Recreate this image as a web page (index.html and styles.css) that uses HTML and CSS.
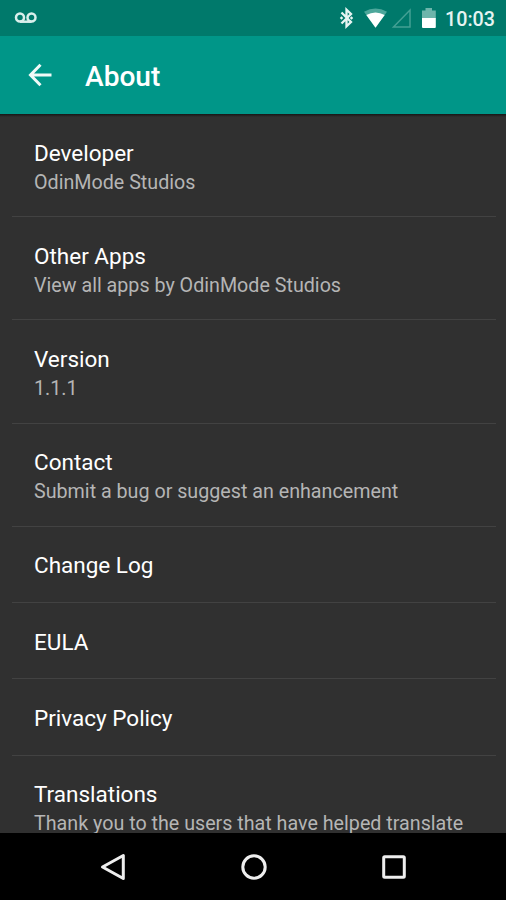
FILE: index.html
```html
<!DOCTYPE html>
<html lang="en">
<head>
<meta charset="utf-8">
<title>About</title>
<link rel="stylesheet" href="styles.css">
</head>
<body>
<div class="screen">
  <div class="status">
    <svg class="voicemail" width="24" height="12" viewBox="0 0 24 12"><g fill="none" stroke="#d9efec" stroke-width="2.5"><circle cx="6" cy="5.500" r="4"/><circle cx="17.500" cy="5.500" r="4"/><path d="M6 9.700h11.500"/></g></svg>
    <svg class="indicators" width="100" height="24" viewBox="0 0 100 24">
      <path d="M1.500 6.500 11 16 6.500 20.300V3.700L11 8 1.500 17.500" fill="none" stroke="#e8f5f3" stroke-width="2.300"/>
      <path d="M1.500 10.300l1.700 1.700-1.700 1.700L-.2 12zM11.500 10.300l1.700 1.700-1.700 1.700L9.800 12z" fill="#e8f5f3"/>
      <path d="M24 5.800Q35.500-1 47 5.800L35.500 21.500z" fill="#4da79b"/>
      <path d="M26.300 9Q35.500 3.800 44.700 9L35.500 21.700z" fill="#fff"/>
      <path d="M53.500 21H70V4z" fill="none" stroke="#43a094" stroke-width="1.500"/>
      <path d="M82 4.500h3.500V2h6.500v2.500h3.800v8H82z" fill="#6db5ab"/>
      <path d="M82 12h13.800v9q0 1-1 1H83q-1 0-1-1z" fill="#fff"/>
    </svg>
    <span class="clock">10:03</span>
  </div>
  <header class="toolbar">
    <svg class="back" width="24" height="24" viewBox="0 0 24 24"><path d="M12.500 1.800 2.500 12 12.500 22.200M2.500 12H23.500" fill="none" stroke="#f0faf8" stroke-width="3"/></svg>
    <h1>About</h1>
  </header>
  <main class="list">
    <div class="row"><div class="title">Developer</div><div class="summary">OdinMode Studios</div></div>
    <div class="row"><div class="title">Other Apps</div><div class="summary">View all apps by OdinMode Studios</div></div>
    <div class="row"><div class="title">Version</div><div class="summary">1.1.1</div></div>
    <div class="row"><div class="title">Contact</div><div class="summary">Submit a bug or suggest an enhancement</div></div>
    <div class="row single"><div class="title">Change Log</div></div>
    <div class="row single"><div class="title">EULA</div></div>
    <div class="row single"><div class="title">Privacy Policy</div></div>
    <div class="row"><div class="title">Translations</div><div class="summary">Thank you to the users that have helped translate</div></div>
  </main>
  <nav class="navbar">
    <svg width="30" height="30" viewBox="0 0 30 30"><path d="M4.500 15 25.300 3.500V26.500z"/></svg>
    <svg width="30" height="30" viewBox="0 0 30 30"><circle cx="15" cy="15" r="11.200"/></svg>
    <svg width="30" height="30" viewBox="0 0 30 30"><rect x="4.700" y="4.700" width="20.600" height="20.600" rx="1"/></svg>
  </nav>
</div>
</body>
</html>
```
FILE: styles.css
```css
* { box-sizing: border-box; }
body { margin: 0; background: #000; font-family: Roboto, sans-serif; }
svg { display: block; flex: none; overflow: visible; }
.screen { width: 506px; height: 900px; display: flex; flex-direction: column; overflow: hidden; }
.status { height: 36px; flex: none; display: flex; align-items: center; padding: 0 11px 0 14px; background: #00796b; }
.indicators { margin: 0 5.500px 0 auto; }
.clock { color: #e6f4f2; font-size: 19.7px; font-weight: 500; line-height: 24px; margin-top: 3px; }
.toolbar { height: 78px; flex: none; display: flex; align-items: center; padding-left: 28px; background: #009688; }
.toolbar h1 { margin: 3px 0 0 33px; color: #fff; font-size: 28.1px; font-weight: 500; line-height: 34px; }
.list { flex: 1; min-height: 0; overflow: hidden; background: linear-gradient(#161616, #303030 3px); padding: 0 10px 0 12px; }
.row { height: 103.2px; padding: 24.600px 0 0 22px; border-bottom: 1.400px solid #424242; white-space: nowrap; }
.row.single { height: 76.300px; }
.title { color: #fff; font-size: 22.5px; line-height: 28px; }
.summary { color: #b5b5b5; font-size: 19.7px; line-height: 31.600px; }
.navbar { height: 67px; flex: none; display: flex; justify-content: center; align-items: center; gap: 110.500px; background: #000; padding-left: 1px; }
.navbar svg { fill: none; stroke: #eee; stroke-width: 3; stroke-linejoin: round; }
```
